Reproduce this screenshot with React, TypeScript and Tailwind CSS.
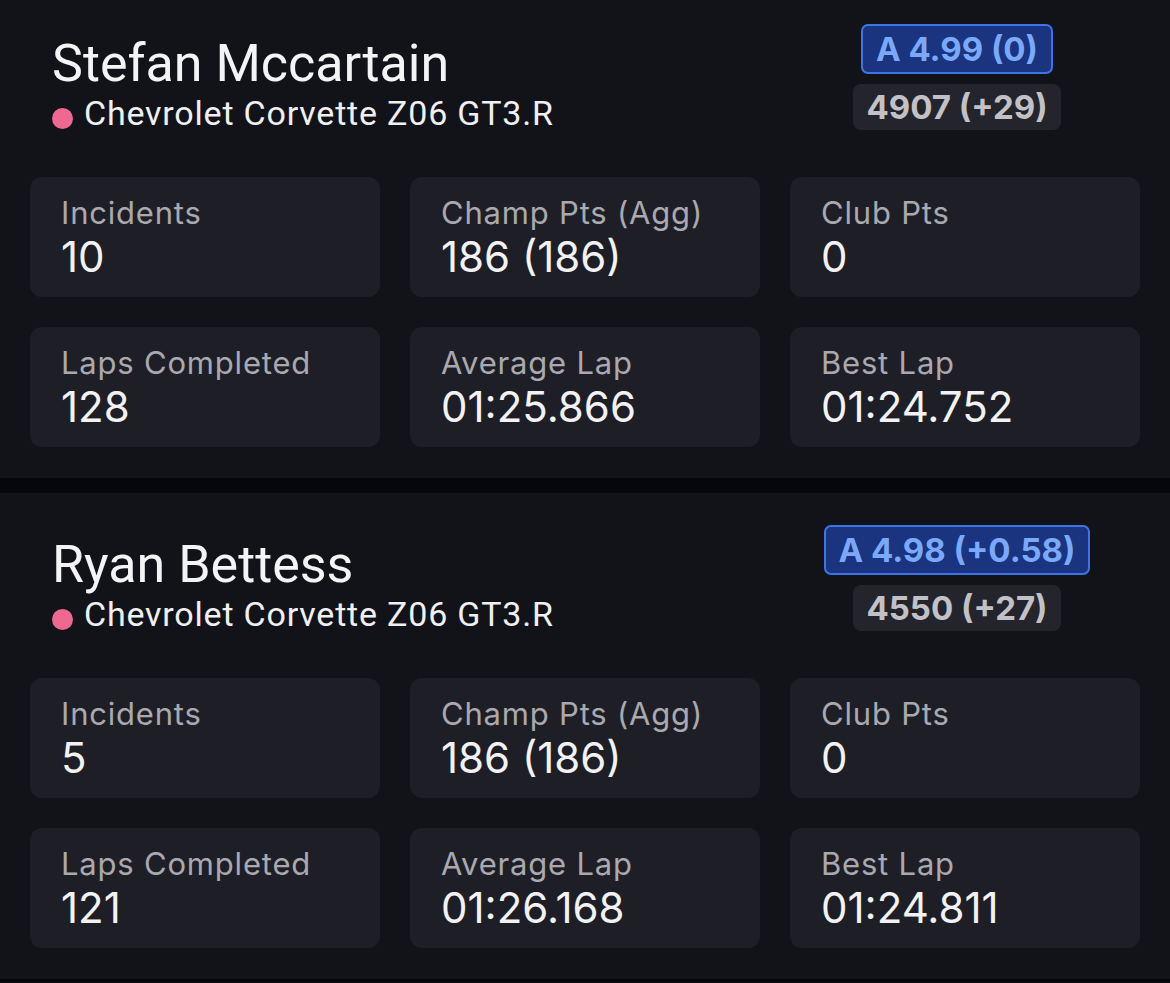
import React from 'react'

type Stat = { label: string; value: string }

type Driver = {
  name: string
  car: string
  sr: string
  irating: string
  stats: Stat[]
}

const drivers: Driver[] = [
  {
    name: 'Stefan Mccartain',
    car: 'Chevrolet Corvette Z06 GT3.R',
    sr: 'A 4.99 (0)',
    irating: '4907 (+29)',
    stats: [
      { label: 'Incidents', value: '10' },
      { label: 'Champ Pts (Agg)', value: '186 (186)' },
      { label: 'Club Pts', value: '0' },
      { label: 'Laps Completed', value: '128' },
      { label: 'Average Lap', value: '01:25.866' },
      { label: 'Best Lap', value: '01:24.752' },
    ],
  },
  {
    name: 'Ryan Bettess',
    car: 'Chevrolet Corvette Z06 GT3.R',
    sr: 'A 4.98 (+0.58)',
    irating: '4550 (+27)',
    stats: [
      { label: 'Incidents', value: '5' },
      { label: 'Champ Pts (Agg)', value: '186 (186)' },
      { label: 'Club Pts', value: '0' },
      { label: 'Laps Completed', value: '121' },
      { label: 'Average Lap', value: '01:26.168' },
      { label: 'Best Lap', value: '01:24.811' },
    ],
  },
]

function StatBox({ label, value }: Stat) {
  return (
    <div className="h-[120px] rounded-[12px] bg-[#1e1f26] pl-[31px] pt-[18px]">
      <div className="text-[31px] leading-[36px] tracking-[0.8px] text-[#a9a9af]">{label}</div>
      <div className="text-[42px] leading-[51px] text-[#f2f2f4]">{value}</div>
    </div>
  )
}

function DriverCard({ driver }: { driver: Driver }) {
  return (
    <section className="h-[486px] bg-[#121319] px-[30px]">
      <div className="flex h-[185px] justify-between pl-[22px] pr-[43px]">
        <div className="pt-[44px] font-['Roboto',sans-serif]">
          <h1 className="text-[52px] leading-[56px] text-[#f4f4f6]">{driver.name}</h1>
          <div className="mt-[1px] flex items-start gap-[11px]">
            <span className="mt-[15px] h-[21px] w-[21px] shrink-0 rounded-full bg-[#ef6891]" />
            <span className="text-[34px] leading-[40px] tracking-[0.8px] text-[#f0f0f2]">{driver.car}</span>
          </div>
        </div>
        <div className="flex w-[280px] flex-col items-center gap-[10px] pt-[32px] font-bold">
          <div className="rounded-[7px] border-2 border-[#3f74e8] bg-[#1a3480] px-[13px] text-[33px] leading-[46px] text-[#7aa9fa]">
            {driver.sr}
          </div>
          <div className="rounded-[8px] bg-[#24252c] px-[13px] text-[33px] leading-[46px] text-[#c2c2c6]">
            {driver.irating}
          </div>
        </div>
      </div>
      <div className="grid grid-cols-3 gap-[30px]">
        {driver.stats.map((s) => (
          <StatBox key={s.label} label={s.label} value={s.value} />
        ))}
      </div>
    </section>
  )
}

export default function App() {
  return (
    <div className="min-h-screen overflow-hidden bg-[#06070c] font-['Inter',sans-serif]">
      <div className="-mt-[8px] flex flex-col gap-[15px]">
        {drivers.map((d) => (
          <DriverCard key={d.name} driver={d} />
        ))}
      </div>
    </div>
  )
}
